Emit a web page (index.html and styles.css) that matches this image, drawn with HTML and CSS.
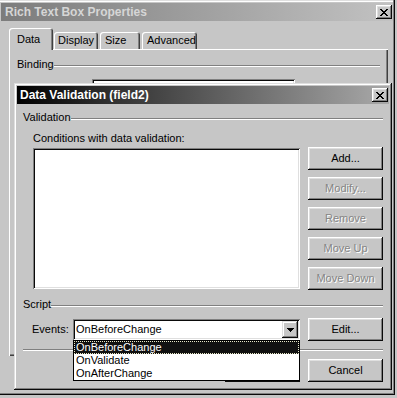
FILE: index.html
```html
<!DOCTYPE html>
<html>
<head>
<meta charset="utf-8">
<title>Rich Text Box Properties</title>
<link rel="stylesheet" href="styles.css">
</head>
<body>
<div class="win">
  <div class="titlebar title-inactive">
    <span class="title-text">Rich Text Box Properties</span>
    <span class="xbtn"><svg width="8" height="7" viewBox="0 0 8 7" shape-rendering="crispEdges"><path d="M0 0h2v1H0zM6 0h2v1H6zM1 1h2v1H1zM5 1h2v1H5zM2 2h4v1H2zM3 3h2v1H3zM2 4h4v1H2zM1 5h2v1H1zM5 5h2v1H5zM0 6h2v1H0zM6 6h2v1H6z" fill="#000"/></svg></span>
  </div>
  <div class="tabs">
    <div class="tab tab-sel">Data</div>
    <div class="tab tab-display">Display</div>
    <div class="tab tab-size">Size</div>
    <div class="tab tab-adv">Advanced</div>
  </div>
  <div class="tabpage">
    <div class="group"><span class="group-label">Binding</span><span class="etch"></span></div>
    <div class="stub"></div>
  </div>

  <div class="dlg">
    <div class="titlebar title-active">
      <span class="title-text">Data Validation (field2)</span>
      <span class="xbtn"><svg width="8" height="7" viewBox="0 0 8 7" shape-rendering="crispEdges"><path d="M0 0h2v1H0zM6 0h2v1H6zM1 1h2v1H1zM5 1h2v1H5zM2 2h4v1H2zM3 3h2v1H3zM2 4h4v1H2zM1 5h2v1H1zM5 5h2v1H5zM0 6h2v1H0zM6 6h2v1H6z" fill="#000"/></svg></span>
    </div>
    <div class="dlg-body">
      <div class="group"><span class="group-label">Validation</span><span class="etch"></span></div>
      <div class="indent">
        <div class="cap">Conditions with data validation:</div>
        <div class="cond-row">
          <div class="listbox"></div>
          <div class="btncol">
            <div class="btn">Add...</div>
            <div class="btn disabled">Modify...</div>
            <div class="btn disabled">Remove</div>
            <div class="btn disabled">Move Up</div>
            <div class="btn disabled">Move Down</div>
          </div>
        </div>
      </div>
      <div class="group group-script"><span class="group-label">Script</span><span class="etch"></span></div>
      <div class="events-row">
        <span class="lbl">Events:</span>
        <div class="combo">
          <span class="combo-text">OnBeforeChange</span>
          <span class="combo-arrow"><svg width="7" height="4" viewBox="0 0 7 4" shape-rendering="crispEdges"><path d="M0 0h7v1H0zM1 1h5v1H1zM2 2h3v1H2zM3 3h1v1H3z" fill="#000"/></svg></span>
        </div>
        <div class="btn btn-edit">Edit...</div>
      </div>
      <div class="sep"></div>
      <div class="bottom-row">
        <div class="btn">OK</div>
        <div class="btn">Cancel</div>
      </div>
    </div>
    <div class="droplist">
      <div class="opt opt-sel">OnBeforeChange</div>
      <div class="opt">OnValidate</div>
      <div class="opt">OnAfterChange</div>
    </div>
  </div>
</div>
</body>
</html>
```

FILE: styles.css
```css
* { box-sizing: border-box; margin: 0; padding: 0; }

body {
  margin: 0;
  width: 397px;
  height: 398px;
  overflow: hidden;
  background: #c6c6c6;
  font: 11px/13px "Liberation Sans", Arial, sans-serif;
  color: #000;
}

.win {
  position: relative;
  width: 395px;
  height: 395px;
  padding: 3px 2px 0 1px;
  background: #c6c6c6;
  box-shadow: inset -1px -1px #0a0a0a, inset -2px -2px #808080, inset 0 1px #dfdfdf, inset 0 2px #fff;
}

.titlebar {
  height: 18px;
  display: flex;
  align-items: center;
  padding: 0 1px 0 4px;
}

.title-inactive {
  background: linear-gradient(90deg, #7c7c7c, #c2c2c2);
  color: #d6d6d6;
}

.title-active {
  padding-left: 3px;
  background: linear-gradient(90deg, #000 0%, #303030 25%, #a9a9a9 100%);
  color: #fff;
}

.title-text {
  flex: 1;
  font-weight: bold;
  font-size: 12px;
  line-height: 14px;
  white-space: nowrap;
}

.xbtn {
  width: 16px;
  height: 14px;
  display: flex;
  align-items: center;
  justify-content: center;
  background: #c6c6c6;
  box-shadow: inset -1px -1px #0a0a0a, inset 1px 1px #fff, inset -2px -2px #808080, inset 2px 2px #dfdfdf;
}

.tabs {
  display: flex;
  align-items: flex-end;
  gap: 2px;
  height: 21px;
  margin: 7px 0 0 8px;
}

.tab {
  height: 17px;
  padding: 2px 0 0 5px;
  border-radius: 3px 3px 0 0;
  background: #c6c6c6;
  box-shadow: inset 1px 1px #fff, inset -1px 0 #404040, inset -2px 0 #808080;
  white-space: nowrap;
}

.tab-sel {
  width: 44px;
  height: 22px;
  padding: 5px 0 0 8px;
  margin: 0 -1px -1px 0;
  z-index: 1;
}

.tab-display { width: 44px; padding-left: 4px; }
.tab-size { width: 40px; }
.tab-adv { width: 55px; }

.tabpage {
  width: 379px;
  height: 307px;
  margin-left: 8px;
  padding: 9px 8px 0 8px;
  box-shadow: inset 1px 1px #fff, inset -1px -1px #404040, inset -2px -2px #808080;
}

.group {
  display: flex;
  align-items: flex-start;
  height: 13px;
}

.group-label { white-space: nowrap; }

.etch {
  flex: 1;
  height: 2px;
  margin-top: 7px;
  border-top: 1px solid #808080;
  border-bottom: 1px solid #fff;
}

.stub {
  width: 203px;
  height: 20px;
  margin: 8px 0 0 75px;
  background: #fff;
  box-shadow: inset 1px 1px #808080, inset -1px -1px #fff, inset 2px 2px #0a0a0a, inset -2px -2px #dfdfdf;
}

.dlg {
  position: absolute;
  left: 14px;
  top: 83px;
  width: 378px;
  height: 307px;
  padding: 3px;
  background: #c6c6c6;
  box-shadow: inset -1px -1px #0a0a0a, inset 1px 1px #dfdfdf, inset -2px -2px #808080, inset 2px 2px #fff;
}

.dlg-body {
  padding: 7px 6px 0 6px;
}

.indent { padding-left: 10px; }

.cap { margin-top: 8px; height: 13px; }

.cond-row {
  display: flex;
  margin-top: 2px;
}

.listbox {
  width: 267px;
  height: 141px;
  margin: 1px 8px 0 0;
  background: #fff;
  box-shadow: inset 1px 1px #808080, inset -1px -1px #fff, inset 2px 2px #0a0a0a, inset -2px -2px #dfdfdf;
}

.btncol {
  display: flex;
  flex-direction: column;
  gap: 7px;
}

.btn {
  width: 75px;
  height: 23px;
  display: flex;
  align-items: center;
  justify-content: center;
  background: #c6c6c6;
  box-shadow: inset -1px -1px #0a0a0a, inset 1px 1px #fff, inset -2px -2px #808080, inset 2px 2px #dfdfdf;
  white-space: nowrap;
}

.btn.disabled {
  color: #858585;
  text-shadow: 1px 1px #fff;
}

.group-script { margin-top: 8px; }

.events-row {
  display: flex;
  align-items: center;
  margin-top: 7px;
  padding-left: 9px;
}

.lbl { width: 41px; }

.combo {
  width: 227px;
  height: 21px;
  display: flex;
  align-items: center;
  padding: 2px;
  background: #fff;
  box-shadow: inset 1px 1px #808080, inset -1px -1px #fff, inset 2px 2px #0a0a0a, inset -2px -2px #dfdfdf;
}

.combo-text { flex: 1; padding-left: 1px; }

.combo-arrow {
  width: 16px;
  height: 17px;
  display: flex;
  align-items: center;
  justify-content: center;
  background: #c6c6c6;
  box-shadow: inset -1px -1px #0a0a0a, inset 1px 1px #dfdfdf, inset -2px -2px #808080, inset 2px 2px #fff;
}

.btn-edit { margin-left: 8px; }

.sep {
  height: 2px;
  margin-top: 8px;
  border-top: 1px solid #808080;
  border-bottom: 1px solid #fff;
}

.bottom-row {
  display: flex;
  justify-content: flex-end;
  gap: 8px;
  margin-top: 8px;
}

.droplist {
  position: absolute;
  left: 59px;
  top: 257px;
  width: 227px;
  height: 41px;
  background: #fff;
  border: 1px solid #000;
}

.opt {
  height: 13px;
  padding-left: 2px;
  line-height: 13px;
}

.opt-sel {
  background: #111;
  color: #fff;
  outline: 1px dotted #e8e8c8;
  outline-offset: -1px;
}
```
